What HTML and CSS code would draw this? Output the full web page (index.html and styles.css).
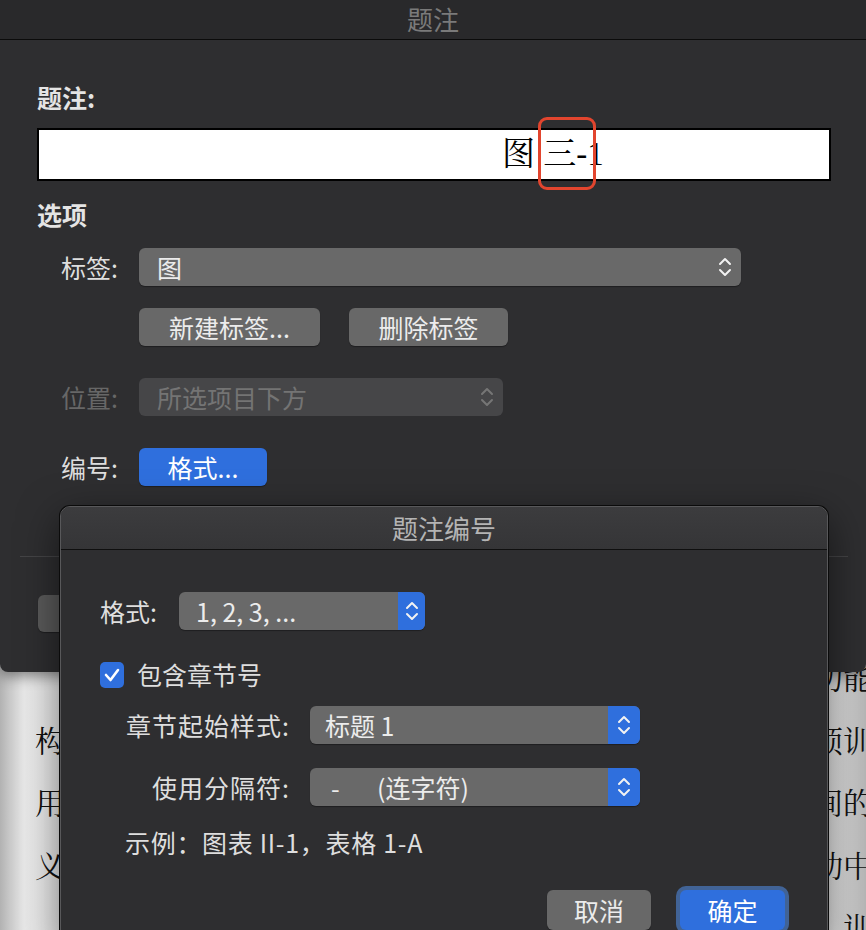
FILE: index.html
```html
<!DOCTYPE html>
<html lang="zh-CN">
<head>
  <meta charset="UTF-8" />
  <title>题注</title>
  <meta name="viewport" content="width=device-width, initial-scale=1.0" />
  <link rel="stylesheet" href="styles.css">
</head>
<body>
  <!-- document page behind the dialogs -->
  <div class="doc">
    <div class="doc-line"><span></span><span>功能</span></div>
    <div class="doc-line"><span>构</span><span>预训</span></div>
    <div class="doc-line"><span>用</span><span>间的</span></div>
    <div class="doc-line"><span>义</span><span>动中</span></div>
    <div class="doc-line"><span></span><span>训</span></div>
  </div>

  <div class="sheet">
    <div class="titlebar">题注</div>
    <div class="sheet-body">
      <div class="heading">题注:</div>
      <div class="caption-field">
        <span class="caption-text">图 三-1</span>
        <div class="mark-box"></div>
      </div>

      <div class="heading section">选项</div>

      <div class="form-row">
        <span class="form-label">标签:</span>
        <div class="select label-select">图
          <svg class="arrows" width="14" height="24" viewBox="0 0 14 24"><polyline points="2,9 7,4 12,9" /><polyline points="2,15 7,20 12,15" /></svg>
        </div>
      </div>

      <div class="form-row buttons">
        <button class="btn new-label">新建标签...</button>
        <button class="btn del-label">删除标签</button>
      </div>

      <div class="form-row wide-gap disabled">
        <span class="form-label">位置:</span>
        <div class="select pos-select">所选项目下方
          <svg class="arrows" width="14" height="24" viewBox="0 0 14 24"><polyline points="2,9 7,4 12,9" /><polyline points="2,15 7,20 12,15" /></svg>
        </div>
      </div>

      <div class="form-row wide-gap">
        <span class="form-label">编号:</span>
        <button class="btn primary format-btn">格式...</button>
      </div>

      <div class="divider"></div>

      <!-- footer buttons sit under the numbering panel -->
      <div class="sheet-actions">
        <button class="btn"></button>
      </div>
    </div>
  </div>

  <div class="panel">
    <div class="panel-title">题注编号</div>
    <div class="panel-body">
      <div class="row">
        <span class="short-label">格式:</span>
        <div class="select stepped fmt-select">1, 2, 3, ...
          <span class="step"><svg width="14" height="24" viewBox="0 0 14 24"><polyline points="2,9 7,4 12,9" /><polyline points="2,15 7,20 12,15" /></svg></span>
        </div>
      </div>

      <div class="check-row">
        <span class="checkbox"><svg width="24" height="26" viewBox="0 0 24 26"><polyline points="6,13 10.5,18 18,8" /></svg></span>
        包含章节号
      </div>

      <div class="row chapter-row">
        <span class="long-label">章节起始样式:</span>
        <div class="select stepped long-select">标题 1
          <span class="step"><svg width="14" height="24" viewBox="0 0 14 24"><polyline points="2,9 7,4 12,9" /><polyline points="2,15 7,20 12,15" /></svg></span>
        </div>
      </div>

      <div class="row sep-row">
        <span class="long-label">使用分隔符:</span>
        <div class="select stepped long-select"><span class="dash">-</span>(连字符)
          <span class="step"><svg width="14" height="24" viewBox="0 0 14 24"><polyline points="2,9 7,4 12,9" /><polyline points="2,15 7,20 12,15" /></svg></span>
        </div>
      </div>

      <div class="example">示例：图表 II-1，表格 1-A</div>

      <div class="actions">
        <button class="btn cancel">取消</button>
        <button class="btn primary ok">确定</button>
      </div>
    </div>
  </div>
</body>
</html>
```

FILE: styles.css
```css
* { box-sizing: border-box; }
html, body { margin: 0; }
body { width: 866px; height: 930px; overflow: hidden; position: relative; font-family: "Noto Sans CJK SC", "Noto Sans", sans-serif; font-size: 25px; color: #dedede; background: #2d2d2f; }

/* document */
.doc { height: 930px; padding: 648px 0 0 35px; color: #111; font-family: "Liberation Serif", "Noto Serif CJK SC", "Noto Sans CJK SC", serif; font-size: 30px;
  background: linear-gradient(to right, #b2b2b2 0, #e9e9e9 24px, #fbfbfb 180px, #fbfbfb 700px, #e4e4e4 835px, #b6b6b6 866px); }
.doc-line { display: flex; justify-content: space-between; height: 62.5px; line-height: 62.5px; margin-right: -7px; }

/* main sheet */
.sheet { position: absolute; left: 0; top: 0; width: 866px; height: 672px; background: #2e2e30; border-radius: 0 0 8px 8px; box-shadow: 0 4px 14px rgba(0,0,0,0.45); }
.titlebar { height: 40px; line-height: 37px; text-align: center; color: #7a7a7a; font-size: 26px; background: #29292b; border-bottom: 1px solid #0b0b0b; }
.sheet-body { padding: 42px 35px 0 37px; }
.heading { font-weight: bold; line-height: 30px; color: #e4e4e4; }
.heading.section { margin-top: 18px; }

.caption-field { position: relative; margin-top: 16px; width: 794px; height: 53px; background: #fff; border: 2px solid #000; padding-left: 463px; color: #000; font-family: "Liberation Serif", "Noto Serif CJK SC", "Noto Sans CJK SC", serif; font-size: 33px; line-height: 49px; }
.mark-box { position: absolute; left: 499px; top: -13px; width: 58px; height: 73px; border: 3px solid #e2452e; border-radius: 9px; }

.form-row { display: flex; align-items: center; margin-top: 19px; padding-left: 24px; }
.form-row.buttons { margin-top: 22px; padding-left: 102px; gap: 29px; }
.form-row.wide-gap { margin-top: 32px; }
.form-label { width: 78px; line-height: 38px; }
.disabled .form-label { color: #676767; }

.select { position: relative; height: 38px; line-height: 38px; background: #696969; border-radius: 6px; padding-left: 18px; color: #ececec; box-shadow: 0 1px 1px rgba(0,0,0,0.35); }
.select svg polyline { fill: none; stroke: #f2f2f2; stroke-width: 2; stroke-linecap: round; stroke-linejoin: round; }
.select .arrows { position: absolute; right: 9px; top: 7px; }
.label-select { width: 602px; }
.pos-select { width: 364px; background: #464648; color: #747474; box-shadow: none; }
.pos-select svg polyline { stroke: #767676; }

.btn { height: 38px; padding: 0; border: none; border-radius: 6px; background: #686868; color: #ececec; font-family: inherit; font-size: 25px; line-height: 38px; box-shadow: 0 1px 1px rgba(0,0,0,0.35); }
.btn.primary { background: #2f6fdd; color: #fff; }
.new-label { width: 181px; }
.del-label { width: 159px; }
.format-btn { width: 128px; }

.divider { margin: 70px 0 0 -17px; width: 828px; height: 1px; background: #444446; }
.sheet-actions { display: flex; margin: 38px 0 0 1px; }
.sheet-actions .btn { width: 160px; height: 37px; background: #5a5a5a; }

/* numbering panel */
.panel { position: absolute; left: 60px; top: 506px; width: 768px; height: 440px; background: #2e2e30; border: 1px solid #58585a; border-radius: 10px 10px 0 0; box-shadow: 0 0 0 1px #0b0b0b, 0 12px 40px rgba(0,0,0,0.55); }
.panel-title { height: 43px; line-height: 41px; text-align: center; color: #b4b4b4; font-size: 26px; background: linear-gradient(#3c3c3e, #353537); border-bottom: 1px solid #0f0f0f; border-radius: 9px 9px 0 0; }
.panel-body { padding: 42px 42px 0 39px; }

.row { display: flex; align-items: center; }
.short-label { width: 79px; line-height: 38px; }
.long-label { width: 190px; padding-right: 20px; text-align: right; line-height: 38px; letter-spacing: 1px; box-sizing: content-box; }
.chapter-row { margin-top: 18px; }
.sep-row { margin-top: 24px; }

.stepped { padding-left: 17px; overflow: hidden; }
.stepped .step { position: absolute; right: 0; top: 0; width: 27px; height: 38px; background: #2f6fdd; display: flex; align-items: center; justify-content: center; }
.fmt-select { width: 246px; }
.long-select { width: 330px; padding-left: 15px; }
.long-select .step { width: 32px; }
.dash { display: inline-block; width: 52px; padding-left: 6px; }

.check-row { display: flex; align-items: center; gap: 13px; margin-top: 31px; height: 27px; line-height: 27px; }
.checkbox { width: 24px; height: 26px; border-radius: 5px; background: #2f6fdd; display: flex; }
.checkbox polyline { fill: none; stroke: #fff; stroke-width: 2.6; stroke-linecap: round; stroke-linejoin: round; }

.example { margin-top: 21px; padding-left: 25px; line-height: 30px; letter-spacing: 0.7px; }

.actions { display: flex; justify-content: flex-end; gap: 29px; margin-top: 33px; }
.actions .btn { height: 40px; }
.cancel { width: 104px; }
.ok { width: 105px; box-shadow: 0 0 0 4px rgba(82,144,235,0.55); }
```
